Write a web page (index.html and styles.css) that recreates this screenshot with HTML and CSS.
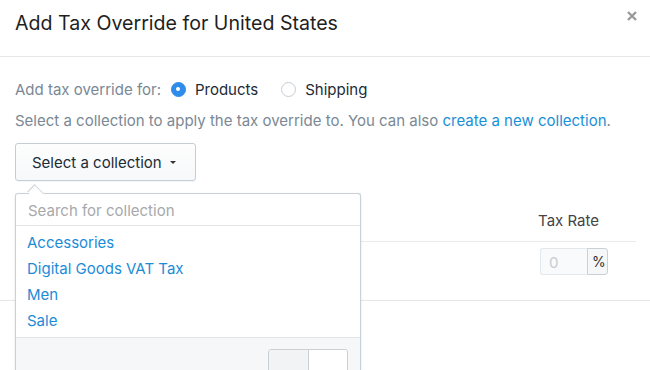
FILE: index.html
```html
<!DOCTYPE html>
<html>
<head>
<meta charset="utf-8">
<link rel="stylesheet" href="styles.css">
</head>
<body>
<div class="modal">
  <div class="modal-header">
    <h2 class="title">Add Tax Override for United States</h2>
    <svg class="close" width="10" height="10" viewBox="0 0 10 10"><path d="M1 1L9 9M9 1L1 9" stroke="#9b9b9b" stroke-width="2.4" stroke-linecap="butt"/></svg>
  </div>
  <div class="modal-body">
    <div class="radio-row">
      <span class="muted">Add tax override for:</span>
      <label class="radio"><span class="dot checked"></span>Products</label>
      <label class="radio"><span class="dot"></span>Shipping</label>
    </div>
    <p class="help">Select a collection to apply the tax override to. You can also <a class="link">create a new collection</a>.</p>
    <div class="picker">
      <button class="btn">Select a collection <span class="caret"></span></button>
      <div class="popover">
        <div class="search">Search for collection</div>
        <ul class="list">
          <li>Accessories</li>
          <li>Digital Goods VAT Tax</li>
          <li>Men</li>
          <li>Sale</li>
        </ul>
        <div class="pop-footer">
          <div class="btn-group"><span class="seg seg-a"></span><span class="seg"></span></div>
        </div>
      </div>
    </div>
    <div class="table">
      <div class="thead"><span class="th">Tax Rate</span></div>
      <div class="trow">
        <div class="input-group"><span class="input">0</span><span class="addon">%</span></div>
      </div>
    </div>
  </div>
  <div class="modal-footer"></div>
</div>
</body>
</html>
```
FILE: styles.css
```css
* { box-sizing: border-box; }
html, body { margin: 0; padding: 0; background: #fff; }
body {
  font-family: Inter, "Liberation Sans", Arial, sans-serif;
  font-size: 15px;
  color: #212b36;
  width: 650px;
  height: 370px;
  overflow: hidden;
}
.modal { position: relative; height: 370px; overflow: hidden; }
.modal-header {
  height: 57px;
  border-bottom: 1px solid #e6e6e6;
  display: flex;
  align-items: flex-start;
  justify-content: space-between;
  padding: 0 13px 0 15px;
}
.title {
  margin: 11px 0 0;
  font-weight: normal;
  font-size: 19.6px;
  color: #1f1f1f;
}
.close { margin-top: 11px; }
.modal-body { padding: 23px 14px 0 15px; }
.radio-row { display: flex; align-items: center; height: 18px; }
.muted { color: #7a8895; }
.radio { display: flex; align-items: center; color: #212b36; margin-left: 10px; margin-right: 13px; }
.dot {
  width: 15px; height: 15px; border-radius: 50%;
  border: 1px solid #c4cdd5; background: #fff;
  margin-right: 9px; position: relative;
}
.dot.checked { background: #2f8cea; border-color: #2f8cea; }
.dot.checked::after {
  content: ""; position: absolute; left: 4.5px; top: 4.5px;
  width: 4px; height: 4px; border-radius: 50%; background: #fff;
}
.help { margin: 14px 0 0; color: #7a8895; line-height: 18px; }
.link { color: #1a8fd8; }
.picker { position: relative; margin-top: 13px; }
.btn {
  height: 38px; width: 181px;
  border: 1px solid #c4cdd5; border-radius: 3px;
  background: linear-gradient(#fdfdfd, #f6f8fa);
  font: inherit; font-size: 15px; color: #212b36;
  padding: 0 0 0 16px; text-align: left;
  display: flex; align-items: center;
  box-shadow: 0 1px 0 rgba(0,0,0,0.03);
}
.caret {
  display: inline-block; margin-left: 8px;
  border-left: 3px solid transparent; border-right: 3px solid transparent;
  border-top: 3px solid #333;
}
.popover {
  position: absolute; left: 0; top: 50px; width: 346px; height: 177px;
  background: #fff; border: 1px solid #c9d0d6; border-bottom: none; border-radius: 3px 3px 0 0;
  box-shadow: 0 1px 3px rgba(0,0,0,0.1);
  z-index: 2;
}
.popover::before {
  content: ""; position: absolute; left: 13px; top: -8px;
  width: 12px; height: 12px; background: #fff;
  border-left: 1px solid #c9d0d6; border-top: 1px solid #c9d0d6;
  transform: rotate(45deg) scaleY(0.8);
}
.search {
  height: 32px; border-bottom: 1px solid #e3e6e9;
  padding: 7px 0 0 12px; color: #a7a9ab; position: relative;
}
.list { list-style: none; margin: 0; padding: 4px 0 3px 11px; }
.list li { height: 26px; line-height: 26px; color: #1c8bd8; }
.pop-footer {
  border-top: 1px solid #e3e6e9; background: #f6f7f8;
  height: 40px; padding: 11px 0 0 252px;
}
.btn-group { display: flex; width: 80px; height: 30px; border: 1px solid #c9d0d6; border-radius: 3px; overflow: hidden; }
.seg { flex: 1; background: #fff; }
.seg-a { background: #f1f3f5; border-right: 1px solid #c9d0d6; }
.table { margin-top: 12px; }
.thead {
  height: 49px; border-bottom: 1px solid #ebebeb;
  display: flex; align-items: flex-end; justify-content: flex-end;
  padding: 0 37px 11px 0; color: #444;
}
.trow { height: 58px; display: flex; justify-content: flex-end; padding: 6px 28px 0 0; }
.input-group { display: flex; height: 27px; }
.input {
  width: 47px; border: 1px solid #e3e8ec; border-right: none;
  border-radius: 3px 0 0 3px; background: #f9fafb;
  color: #c5ccd3; padding: 4px 0 0 8px;
}
.addon {
  width: 21px; border: 1px solid #c9d0d6; border-radius: 0 3px 3px 0;
  background: #f6f7f8; color: #333; padding: 4px 0 0 4px; font-size: 14px;
}
.modal-footer { border-top: 1px solid #e6e6e6; height: 12px; }
```
